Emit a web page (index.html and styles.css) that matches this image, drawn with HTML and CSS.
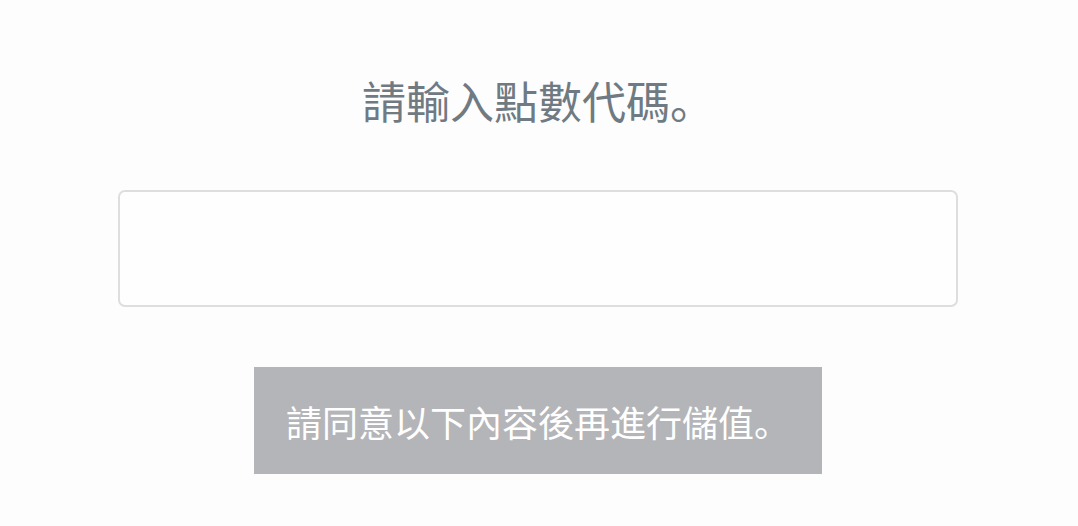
FILE: index.html
```html
<!DOCTYPE html>
<html lang="zh-Hant">
<head>
<meta charset="utf-8">
<title>儲值</title>
<link rel="stylesheet" href="styles.css">
</head>
<body>
<main class="page">
  <h1 class="title">請輸入點數代碼。</h1>
  <input class="code-input" type="text" aria-label="點數代碼">
  <button class="submit" type="button" disabled>請同意以下內容後再進行儲值。</button>
</main>
</body>
</html>
```

FILE: styles.css
```css
html, body {
  margin: 0;
  padding: 0;
  background: #fdfdfd;
}
body {
  font-family: "Noto Sans CJK SC", "Noto Sans CJK TC", "Noto Sans", sans-serif;
  font-feature-settings: "locl" 0;
}
.page {
  display: flex;
  flex-direction: column;
  align-items: center;
  padding-top: 76px;
  padding-right: 2px;
}
.title {
  margin: 0;
  font-size: 44px;
  line-height: 48px;
  font-weight: 400;
  color: #6f7a82;
}
.code-input {
  box-sizing: border-box;
  margin-top: 66px;
  width: 840px;
  height: 117px;
  border: 2px solid #dedede;
  border-radius: 7px;
  background: #fefefe;
  outline: none;
}
.submit {
  margin-top: 60px;
  width: 568px;
  height: 107px;
  border: none;
  border-radius: 0;
  background: #b4b5b8;
  color: #ffffff;
  font-family: "Noto Sans CJK SC", "Noto Sans CJK TC", "Noto Sans", sans-serif;
  font-feature-settings: "locl" 0;
  font-size: 36px;
  font-weight: 400;
  padding: 0;
}
```
